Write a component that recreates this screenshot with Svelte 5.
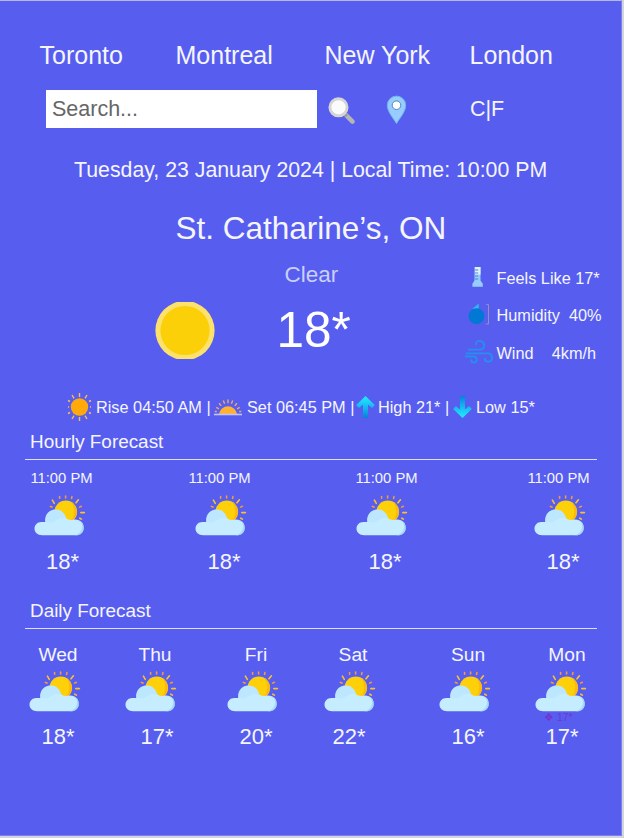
<script>
  const cities = ['Toronto', 'Montreal', 'New York', 'London'];
  const hours = [
    { time: '11:00 PM', temp: '18*' },
    { time: '11:00 PM', temp: '18*' },
    { time: '11:00 PM', temp: '18*' },
    { time: '11:00 PM', temp: '18*' }
  ];
  const days = [
    { name: 'Wed', temp: '18*' },
    { name: 'Thu', temp: '17*' },
    { name: 'Fri', temp: '20*' },
    { name: 'Sat', temp: '22*' },
    { name: 'Sun', temp: '16*' },
    { name: 'Mon', temp: '17*', ghost: '❖ 17*' }
  ];
</script>

{#snippet partly()}
  <svg class="partly" width="52" height="42" viewBox="0 0 52 42">
    <g stroke="#f9c22b" stroke-width="1.6" stroke-linecap="round">
      <path d="M18.4 5.200l1.900 3.100M44.400 4.800l-2.400 3M46.800 17.600h3.600M45.800 23.200l1.600.9" />
      <path stroke="#f39a3a" d="M25.600 1.600v1.600M31.600 1v2M37.900 1.600l-.3 1.800M47.300 11.300l-1.700.8M16.400 11.400l1.600.7" />
    </g>
    <circle cx="31.800" cy="16.800" r="11.300" fill="#fdd009" />
    <path d="M37.500 7.300a11.100 11.100 0 0 1 3 16.400l-3 1.800a16 16 0 0 0 0-18.200" fill="#fbb80e" />
    <path d="M8 40.300c-4.600 0-7.500-2.800-7.500-6.700 0-4 3.200-7 7.300-6.700h3.400c-.7-7.300 4.100-12.500 10.300-12.500 5.400 0 9.500 3.400 10.600 8.900 2.200 1.500 3.600 2 6.600 1.400 7.300-1.100 11 2.900 11 8 0 4.600-3.400 7.600-7.900 7.600z" fill="#c6edff" />
    <path d="M11.200 27c-.7-7.300 4.100-12.600 10.300-12.600 5.400 0 9.500 3.400 10.600 8.900-5.600-1.900-8.700 1-11.100 2.500-2 1.400-3.400 1.600-5 1.400z" fill="#acdfff" opacity=".4" />
    <path d="M44.500 25.700c3.400 1.600 4.200 4.600 3.200 8-.8 3.500-2.800 5.100-6.800 6.600h.9c4.500 0 7.900-3 7.900-7.600 0-3.800-1.800-6.300-5.200-7z" fill="#9cd5fb" opacity=".8" />
  </svg>
{/snippet}

<main>
  <nav>
    {#each cities as city}<a href="#{city}">{city}</a>{/each}
  </nav>

  <div class="search">
    <input type="text" placeholder="Search..." aria-label="Search" />
    <svg width="29" height="29" viewBox="0 0 29 29">
      <path d="M19.500 19.500l6 6.100" stroke="#b5b5b8" stroke-width="4.600" stroke-linecap="round" />
      <path d="M16.800 16.800l3 3" stroke="#919197" stroke-width="2.500" />
      <circle cx="11.500" cy="11.300" r="8.600" fill="#fafbfc" stroke="#d5d5d6" stroke-width="2.900" />
    </svg>
    <svg width="21" height="30" viewBox="0 0 21 30">
      <path d="M10.500 28.500C8 24 1.300 17 1.300 10.300a9.200 9.200 0 0 1 18.400 0C19.700 17 13 24 10.500 28.500z" fill="#98ccfd" stroke="#6bb6ed" />
      <circle cx="10.500" cy="10.200" r="4.300" fill="#fff" stroke="#4788c7" />
    </svg>
    <span class="units">C|F</span>
  </div>

  <p class="date">Tuesday, 23 January 2024 | Local Time: 10:00 PM</p>
  <h1>St. Catharine’s, ON</h1>

  <section class="current">
    <svg class="sun" width="60" height="57" viewBox="0 0 60 57">
      <circle cx="30" cy="28.500" r="29.600" fill="#fde16d" />
      <circle cx="30" cy="28.500" r="24.600" fill="#fcd009" />
    </svg>
    <div class="reading">
      <span class="sky">Clear</span>
      <span class="now">18*</span>
    </div>
    <div class="details">
      <div>
        <svg width="30" height="26" viewBox="0 0 30 26">
          <path d="M10.500 3h6v13.500l2.300 3.200v3H8.400v-3l2.100-3.200z" fill="#98ccfd" />
          <path d="M11 3h5.500v7.500H11z" fill="#dff0fe" />
          <path d="M11 6h3.200M11 9h3.200M11 12h3.200M11 15h3.200" stroke="#4788c7" stroke-width="1" />
        </svg>
        <span>Feels Like 17*</span>
      </div>
      <div>
        <svg width="30" height="26" viewBox="0 0 30 26">
          <path d="M14.700 2.500c-2.500 2.300-6.400 5.500-6.400 5.500l6.400 1.600z" fill="#30b9ec" />
          <circle cx="12.500" cy="15.200" r="8" fill="#0078d4" />
          <path d="M22.300 3.500h2.200v19.500h-2.700" fill="none" stroke="#8e93b7" />
        </svg>
        <span>Humidity  40%</span>
      </div>
      <div>
        <svg width="30" height="26" viewBox="0 0 30 26" fill="none" stroke="#258ff1" stroke-width="1.900" stroke-linecap="round">
          <path d="M4.500 10.600h11.200c6 0 5.800-8.700.2-8.700-2.400 0-4 1.400-4 3.400M2.500 14.400h21.200c5.600 0 5.600 8.200.7 8.200-2.200 0-3.500-1.200-3.500-2.900M1.700 17.500h7.800c4.200 0 4.200 6.100.6 6.100-1.700 0-2.800-1-2.800-2.300" />
        </svg>
        <span>Wind    4km/h</span>
      </div>
    </div>
  </section>

  <section class="facts">
    <svg width="26" height="30" viewBox="0 0 26 30">
      <path d="M12.500 1v4M12.500 25v4M5 3l2 3.400M20 3l-2 3.400M5 27l2-3.400M20 27l-2-3.400M1 8.500l2 1M24 8.500l-2 1M1.100 15h1M23 15h1M1 21.500l2-1M24 21.500l-2-1" stroke="#f6bd57" stroke-width="1.400" />
      <circle cx="12.500" cy="15" r="8.700" fill="#ffa90b" />
    </svg>
    <span class="rise">Rise 04:50 AM |</span>
    <svg class="setting" width="28" height="17" viewBox="0 0 28 17">
      <path d="M5 15a9.100 9.100 0 0 1 18 0z" fill="#ffb132" />
      <path d="M14 .5v3.800M9.300 1.500l1.300 3.200M18.700 1.500l-1.300 3.200M5 4.200l2.200 2.500M23 4.200l-2.200 2.500M2.300 8.300l2.600 1.500M25.700 8.300l-2.600 1.500M.800 12.500h2M27.200 12.500h-2" stroke="#ecab67" stroke-width="1.400" />
      <path d="M0 15.500h28" stroke="#c4c2ef" stroke-width="1.600" />
    </svg>
    <span class="set">Set 06:45 PM |</span>
    <svg class="up" width="19" height="22" viewBox="0 0 19 22">
      <defs><linearGradient id="rising" x2="0" y2="1"><stop stop-color="#22edff" /><stop offset=".6" stop-color="#14afee" /><stop offset="1" stop-color="#087fdb" /></linearGradient></defs>
      <path d="M9.500 0L18.800 9l-2.700 3-4.100-3.600V22H7V8.400L2.900 12 .2 9z" fill="url(#rising)" />
    </svg>
    <span class="high">High 21* |</span>
    <svg class="down" width="19" height="22" viewBox="0 0 19 22">
      <defs><linearGradient id="falling" x2="0" y2="1"><stop stop-color="#087fdb" /><stop offset=".4" stop-color="#14afee" /><stop offset="1" stop-color="#22edff" /></linearGradient></defs>
      <path d="M9.500 22L18.800 13l-2.700-3-4.100 3.600V0H7v13.600L2.900 10 .2 13z" fill="url(#falling)" />
    </svg>
    <span class="low">Low 15*</span>
  </section>

  <h2>Hourly Forecast</h2>
  <section class="hourly">
    {#each hours as h}
      <article>
        <span class="time">{h.time}</span>
        {@render partly()}
        <span class="temp">{h.temp}</span>
      </article>
    {/each}
  </section>

  <h2>Daily Forecast</h2>
  <section class="daily">
    {#each days as d}
      <article>
        <span class="day">{d.name}</span>
        {@render partly()}
        {#if d.ghost}<span class="ghost">{d.ghost}</span>{/if}
        <span class="temp">{d.temp}</span>
      </article>
    {/each}
  </section>
</main>

<style>
  :global(body) {
    background: #d4d4dc;
  }
  main {
    box-sizing: border-box;
    width: 622px;
    height: 836px;
    margin-bottom: 2px;
    padding-top: 39px;
    background: #575eef;
    border-top: 1px solid #b4b6ec;
    border-right: 1px solid #7b80ee;
    border-bottom: 1px solid #7b80ee;
    color: #f5f5ff;
    font-family: 'Liberation Sans', Arial, sans-serif;
    overflow: hidden;
  }
  svg {
    display: block;
    flex: none;
  }
  span {
    white-space: pre;
  }
  nav {
    display: grid;
    grid-template-columns: 136px 149px 145px 100px;
    padding-left: 39.500px;
    font-size: 25px;
    line-height: 31px;
  }
  nav a {
    color: inherit;
    text-decoration: none;
    white-space: nowrap;
  }
  .search {
    display: flex;
    align-items: center;
    height: 38px;
    margin: 19px 0 0 46px;
    font-size: 21.500px;
  }
  input {
    box-sizing: border-box;
    width: 271px;
    height: 38px;
    margin: 0 10px 0 0;
    padding: 1px 6px 0;
    border: 0;
    background: #fff;
    font: inherit;
  }
  input::placeholder {
    color: #666;
    opacity: 1;
  }
  .search svg {
    margin-top: 2px;
  }
  .search svg + svg {
    margin-left: 30px;
  }
  .units {
    margin: 1px 0 0 63px;
  }
  .date {
    margin: 27px 0 0 74px;
    font-size: 21.300px;
    line-height: 30px;
    white-space: nowrap;
  }
  h1 {
    margin: 23px 0 0 175.500px;
    font-size: 31.500px;
    line-height: 40px;
    font-weight: 400;
    white-space: nowrap;
  }
  .current {
    display: flex;
    height: 122px;
    margin-top: 11px;
  }
  .sun {
    margin: 43px 0 0 155px;
  }
  .reading {
    display: flex;
    flex-direction: column;
    width: 248.500px;
    padding-left: 61.500px;
    box-sizing: border-box;
  }
  .sky {
    margin: 1px 0 0 8px;
    color: #c9d0fa;
    font-size: 22.500px;
    line-height: 30px;
  }
  .now {
    margin-top: 10px;
    color: #fff;
    font-size: 49.500px;
    line-height: 60px;
  }
  .details {
    display: flex;
    flex-direction: column;
    gap: 11.500px;
    padding-top: 6px;
    font-size: 16.300px;
  }
  .details div {
    display: flex;
    align-items: center;
    gap: 3px;
    height: 26px;
  }
  .details svg {
    margin-top: -3px;
  }
  .facts {
    display: flex;
    align-items: center;
    height: 30px;
    padding-left: 67px;
    margin-top: 11px;
    font-size: 16.300px;
  }
  .rise {
    width: 118px;
    margin-left: 3px;
  }
  .set {
    width: 109px;
    margin-left: 5px;
  }
  .high {
    width: 75px;
    margin-left: 3px;
  }
  .low {
    margin-left: 4px;
  }
  h2 {
    box-sizing: border-box;
    width: 572px;
    height: 38px;
    margin: 0 0 0 25px;
    padding-left: 5px;
    border-bottom: 1px solid #dedffc;
    font-size: 18.900px;
    line-height: 39px;
    font-weight: 400;
  }
  article {
    display: flex;
    flex-direction: column;
    align-items: center;
    width: 64px;
    position: relative;
  }
  .hourly {
    display: grid;
    grid-template-columns: 158px 167px 172px 64px;
    height: 131px;
    padding: 8px 0 0 29.500px;
    box-sizing: border-box;
  }
  .time {
    font-size: 14.800px;
    line-height: 20px;
  }
  .hourly .partly {
    margin: 7px 0 0 -3px;
  }
  .hourly article:nth-child(2n) .partly {
    margin-left: 3px;
  }
  .hourly article:nth-child(3) .partly {
    margin-left: -9px;
  }
  .temp {
    font-size: 22px;
    line-height: 26px;
    margin-top: 12px;
  }
  .hourly .temp {
    margin-left: 2px;
  }
  .hourly article:nth-child(2n) .temp {
    margin-left: 9px;
  }
  .hourly article:nth-child(3) .temp {
    margin-left: -3px;
  }
  .daily {
    display: grid;
    grid-template-columns: 97px 101px 97px 115px 97px 64px;
    padding: 13px 0 0 26px;
  }
  .day {
    font-size: 19.200px;
    line-height: 26px;
  }
  .daily .partly {
    margin: 3px 0 0 -6px;
  }
  .daily article:nth-child(2) .partly {
    margin-left: -8px;
  }
  .daily article:nth-child(2) .temp {
    margin-left: 4px;
  }
  .daily article:nth-child(4) .temp {
    margin-left: -8px;
  }
  .daily article:nth-child(6) .day {
    margin-left: 4px;
  }
  .daily article:nth-child(6) .partly {
    margin-left: -9px;
  }
  .daily article:nth-child(6) .temp {
    margin-left: -6px;
  }
  .daily .temp {
    margin-top: 11px;
  }
  .ghost {
    position: absolute;
    top: 68px;
    left: 11px;
    color: #7533d0;
    font-size: 10.500px;
    line-height: 14px;
  }
</style>
